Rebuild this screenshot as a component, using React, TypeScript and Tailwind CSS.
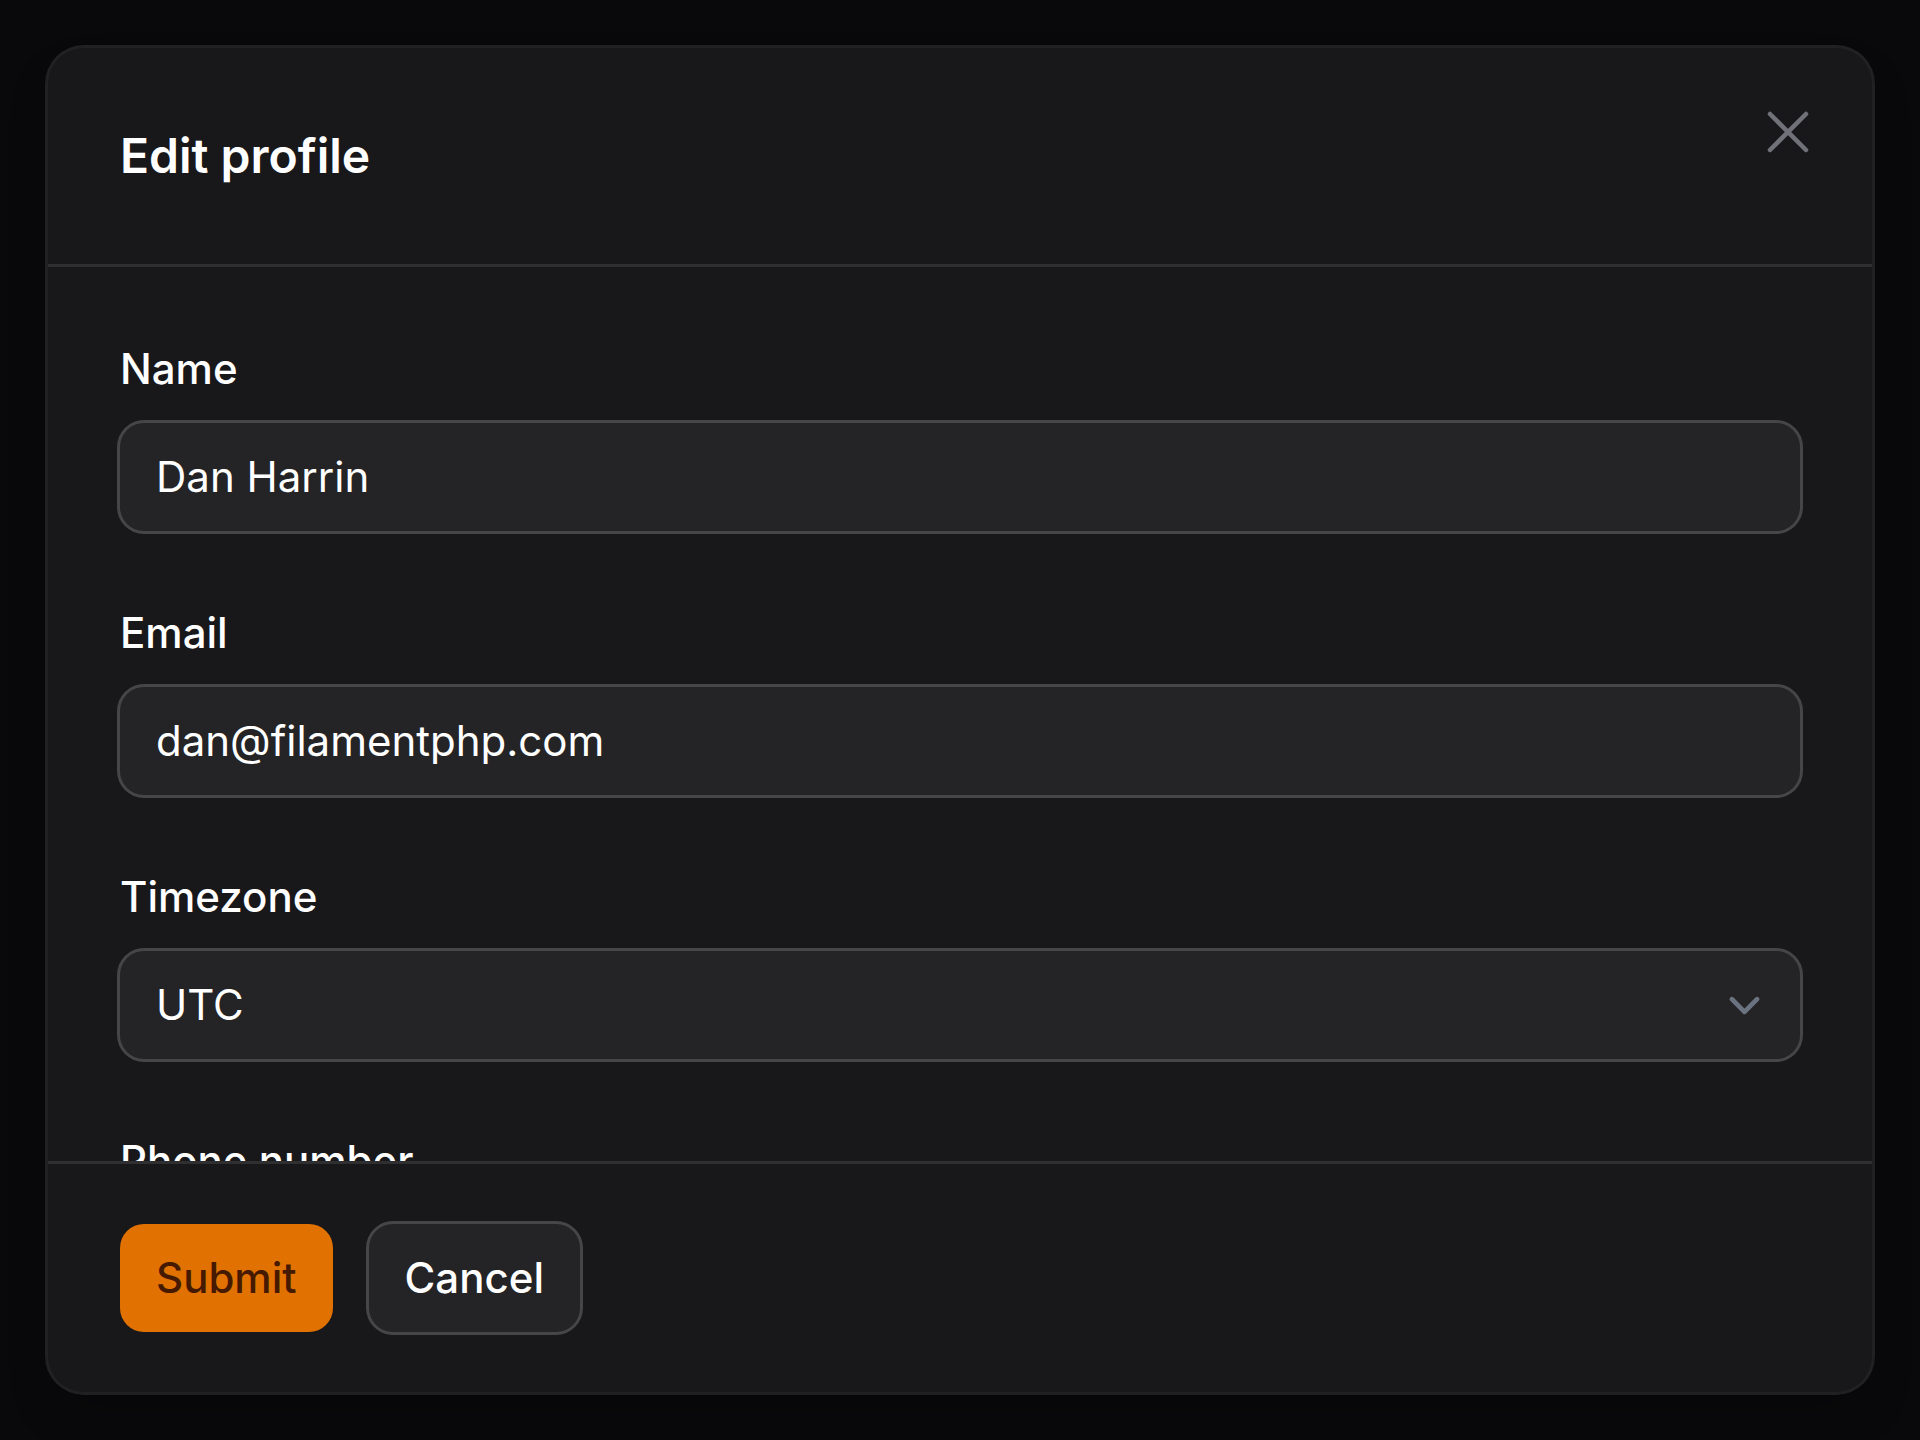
import React from "react";

function Field({ label, children }: { label: string; children: React.ReactNode }) {
  return (
    <div className="flex flex-col gap-[24px]">
      <label className="text-[42px] leading-[60px] font-medium text-white">{label}</label>
      {children}
    </div>
  );
}

function TextInput({ value }: { value: string }) {
  return (
    <div className="h-[108px] rounded-[24px] bg-white/5 ring-[3px] ring-white/20 flex items-center px-[36px]">
      <span className="text-[42px] leading-[72px] text-white">{value}</span>
    </div>
  );
}

export default function App() {
  return (
    <div
      className="w-[1920px] h-[1440px] bg-[#09090b] flex items-center justify-center"
      style={{ fontFamily: "Inter, 'Noto Sans', sans-serif" }}
    >
      <div className="relative w-[1824px] h-[1344px] rounded-[36px] bg-[#18181b] ring-[3px] ring-white/10 shadow-2xl flex flex-col">
        <div className="px-[72px] py-[72px] border-b-[3px] border-white/10">
          <h2 className="text-[48px] leading-[72px] font-semibold text-white">Edit profile</h2>
        </div>
        <button className="absolute top-[48px] right-[48px] w-[72px] h-[72px] text-[#71717a]">
          <svg viewBox="0 0 24 24" fill="none" stroke="currentColor" strokeWidth={1.5} strokeLinecap="round" strokeLinejoin="round" className="w-[72px] h-[72px]">
            <path d="M6 18 18 6M6 6l12 12" />
          </svg>
        </button>
        <div className="flex-1 overflow-hidden px-[72px] pt-[72px] flex flex-col gap-[72px]">
          <Field label="Name">
            <TextInput value="Dan Harrin" />
          </Field>
          <Field label="Email">
            <TextInput value="dan@filamentphp.com" />
          </Field>
          <Field label="Timezone">
            <div className="h-[108px] rounded-[24px] bg-white/5 ring-[3px] ring-white/20 flex items-center justify-between pl-[36px] pr-[24px]">
              <span className="text-[42px] leading-[72px] text-white">UTC</span>
              <svg viewBox="0 0 20 20" fill="none" stroke="#6b7280" strokeWidth={1.5} strokeLinecap="round" strokeLinejoin="round" className="w-[63px] h-[63px]">
                <path d="m6 8 4 4 4-4" />
              </svg>
            </div>
          </Field>
          <Field label="Phone number">
            <TextInput value="" />
          </Field>
        </div>
        <div className="border-t-[3px] border-white/10 px-[72px] py-[60px] flex items-center gap-[36px]">
          <button className="h-[108px] px-[36px] rounded-[24px] bg-[#e17100] text-[#461901] text-[42px] leading-[60px] font-medium">
            Submit
          </button>
          <button className="h-[108px] px-[36px] rounded-[24px] bg-white/5 ring-[3px] ring-white/20 text-white text-[42px] leading-[60px] font-medium">
            Cancel
          </button>
        </div>
      </div>
    </div>
  );
}
